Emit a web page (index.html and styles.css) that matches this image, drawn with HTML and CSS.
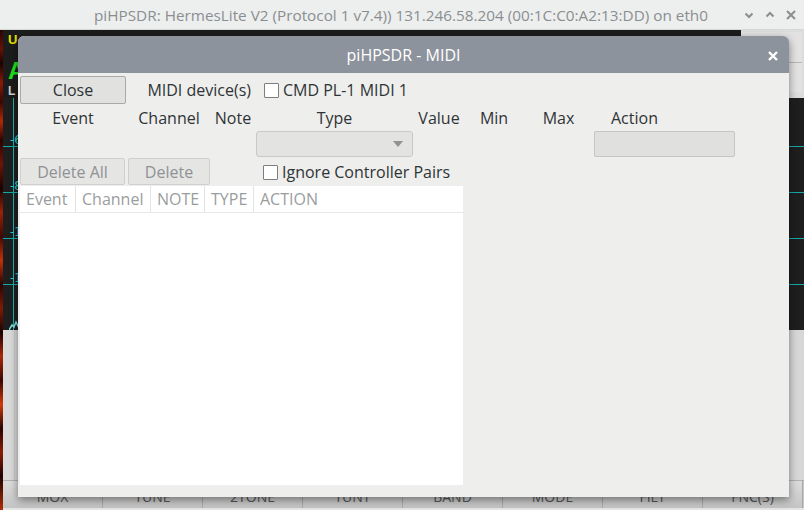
FILE: index.html
```html
<!DOCTYPE html>
<html>
<head>
<meta charset="utf-8">
<link rel="stylesheet" href="styles.css">
</head>
<body>
<div class="screen">
  <header class="wintitle">
    <span class="wintitle-text">piHPSDR: HermesLite V2 (Protocol 1 v7.4)) 131.246.58.204 (00:1C:C0:A2:13:DD) on eth0</span>
    <div class="winctl">
      <svg width="12" height="12" viewBox="0 0 12 12"><path d="M2.5 4.5 L6 8 L9.5 4.5" fill="none" stroke="#8a8e90" stroke-width="2"/></svg>
      <svg width="12" height="12" viewBox="0 0 12 12"><path d="M2.5 7.5 L6 4 L9.5 7.5" fill="none" stroke="#8a8e90" stroke-width="2"/></svg>
      <svg width="12" height="12" viewBox="0 0 12 12"><path d="M2 2 L10 10 M10 2 L2 10" fill="none" stroke="#8a8e90" stroke-width="2"/></svg>
    </div>
  </header>
  <div class="app">
    <div class="wf-strip"></div>
    <div class="app-main">
      <div class="topband">
        <div class="status">
          <div class="st-u">U</div>
          <div class="st-a">A</div>
          <div class="st-l">L</div>
        </div>
        <div class="meter"><div class="meter-top"></div><div class="meter-bot"></div></div>
      </div>
      <div class="pan">
        <div class="vline"></div>
        <div class="db" style="top:36px">-60</div>
        <div class="db" style="top:82px">-80</div>
        <div class="db" style="top:128px">-10</div>
        <div class="db" style="top:174px">-12</div>
        <div class="hline" style="top:48px"></div>
        <div class="hline" style="top:94px"></div>
        <div class="hline" style="top:140px"></div>
        <div class="hline" style="top:186px"></div>
        <svg class="trace" width="20" height="16" viewBox="0 0 20 16"><path d="M0 16 L3 11 L5 13 L7 8 L9 12 L11 6 L13 10 L15 4 L17 9 L20 7" fill="none" stroke="#7fe0e0" stroke-width="1.5"/></svg>
      </div>
      <div class="lower"></div>
      <div class="toolbar">
        <div class="tb">MOX</div><div class="tb">TUNE</div><div class="tb">2TONE</div><div class="tb">TUNT</div>
        <div class="tb">BAND</div><div class="tb">MODE</div><div class="tb">FILT</div><div class="tb">FNC(S)</div>
      </div>
    </div>
  </div>
</div>

<div class="dialog">
  <div class="dlg-title">
    <span></span>
    <span class="dlg-title-text">piHPSDR - MIDI</span>
    <span class="dlg-close"><svg width="10" height="10" viewBox="0 0 10 10"><path d="M1 1 L9 9 M9 1 L1 9" stroke="#fff" stroke-width="2.4" fill="none"/></svg></span>
  </div>
  <div class="dlg-body">
    <div class="grid">
      <button class="btn btn-close">Close</button>
      <div class="lbl-devices">MIDI device(s)</div>
      <label class="chk chk-dev"><span class="box"></span>CMD PL-1 MIDI 1</label>

      <div class="hd hd-event">Event</div>
      <div class="hd hd-channel">Channel</div>
      <div class="hd hd-note">Note</div>
      <div class="hd hd-type">Type</div>
      <div class="hd hd-value">Value</div>
      <div class="hd hd-min">Min</div>
      <div class="hd hd-max">Max</div>
      <div class="hd hd-action">Action</div>

      <div class="combo"><svg width="10" height="6" viewBox="0 0 10 6"><path d="M0 0 L10 0 L5 6 Z" fill="#8f9293"/></svg></div>
      <div class="entry"></div>

      <button class="btn btn-dis btn-delall">Delete All</button>
      <button class="btn btn-dis btn-del">Delete</button>
      <label class="chk chk-ign"><span class="box"></span>Ignore Controller Pairs</label>
    </div>
    <div class="table">
      <div class="thead">
        <div class="th th-event">Event</div>
        <div class="th th-channel">Channel</div>
        <div class="th th-note">NOTE</div>
        <div class="th th-type">TYPE</div>
        <div class="th th-action">ACTION</div>
      </div>
    </div>
  </div>
</div>
</body>
</html>
```
FILE: styles.css
```css
* { box-sizing: border-box; }
html, body { margin: 0; padding: 0; }
body {
  width: 804px;
  height: 510px;
  overflow: hidden;
  background: #e4e4e4;
  font-family: "Open Sans", "Noto Sans", sans-serif;
  font-size: 16px;
  color: #2e3436;
  position: relative;
}
.screen { width: 804px; height: 510px; display: flex; flex-direction: column; }

/* main window title bar */
.wintitle {
  height: 30px;
  background: #edeeee;
  display: flex;
  align-items: center;
  justify-content: center;
  position: relative;
  border-bottom: 1px solid #d6d8d8;
}
.wintitle-text { color: #8a8e90; font-size: 15.3px; margin-right: 2px; }
.winctl {
  position: absolute;
  right: 7px;
  top: 9px;
  display: flex;
  gap: 9px;
}

/* main app area */
.app { flex: 1; display: flex; }
.wf-strip {
  width: 3px;
  background: linear-gradient(180deg, #2a0400 0, #6a1002 4%, #1c0200 7%, #8a1a04 11%, #3a0600 15%, #b02a06 19%, #2a0400 23%, #701404 28%, #1a0200 33%, #9a2206 38%, #420800 43%, #c0320a 48%, #2a0400 53%, #801a04 58%, #1c0200 63%, #a82808 68%, #3c0600 73%, #d03a0a 78%, #2a0400 83%, #8a1c04 88%, #200300 93%, #b02c08 100%);
}
.app-main { flex: 1; display: flex; flex-direction: column; }
.topband { height: 68px; display: flex; background: #1c1c1c; }
.status {
  flex: 1;
  padding: 3px 0 0 5px;
  display: flex;
  flex-direction: column;
  font-family: "Liberation Sans", sans-serif;
  font-weight: bold;
}
.st-u { color: #e5e000; font-size: 13px; line-height: 14px; height: 14px; }
.st-a { color: #1ee01e; font-size: 24px; line-height: 26px; height: 26px; margin-top: 11px; }
.st-l { color: #d0d0d0; font-size: 12px; line-height: 13px; height: 13px; margin-top: 1px; }
.meter { width: 63px; display: flex; flex-direction: column; background: #dcdcdc; padding: 2px 2px 6px 0; }
.meter-top { flex: 1; background: #e2e2e2; border-bottom: 1px solid #b8b8b8; }
.meter-bot { flex: 1; background: #e2e2e2; }

.pan { height: 232px; background: #1e1e1e; position: relative; }
.vline { position: absolute; left: 10px; top: 0; bottom: 0; width: 1px; background: #17b4b4; }
.hline { position: absolute; left: 0; right: 0; height: 1px; background: #16a8a8; }
.db { position: absolute; left: 7px; color: #19d2d2; font-size: 12px; line-height: 12px; font-family: "DejaVu Sans", sans-serif; }
.trace { position: absolute; left: 6px; bottom: 0; }

.lower {
  height: 150px;
  background: linear-gradient(90deg, #d9d9d9 0 11px, #c9c9c9 11px 12px, #d7d7d7 12px);
}
.toolbar { height: 28px; display: flex; background: #c8c8c8; border-top: 1px solid #b0b0b0; }
.tb {
  width: 100px;
  border-right: 1px solid #a8a8a8;
  background: linear-gradient(#dcdcdc, #c4c4c4);
  color: #555;
  font-size: 14px;
  display: flex;
  align-items: center;
  justify-content: center;
  padding-top: 4px;
}

/* dialog window */
.dialog {
  position: absolute;
  left: 18px;
  top: 36px;
  width: 771px;
  height: 461px;
  background: #eeeeec;
  border-radius: 6px 6px 0 0;
  box-shadow: 0 3px 9px rgba(0,0,0,0.45);
  display: flex;
  flex-direction: column;
  overflow: hidden;
}
.dlg-title {
  height: 37px;
  background: #8d939c;
  display: grid;
  grid-template-columns: 1fr auto 1fr;
  align-items: center;
  color: #fff;
}
.dlg-title-text { font-size: 16px; padding-top: 1px; }
.dlg-close { justify-self: end; margin-right: 11px; display: flex; padding-top: 2px; }

.dlg-body { flex: 1; padding: 3px 2px 0; display: flex; flex-direction: column; }
.grid {
  display: grid;
  grid-template-columns: 108px 82px 46px 157px 52px 58px 71px 141px;
  grid-template-rows: 28px 27px 27px 28px;
  align-items: center;
}
.btn {
  font: inherit;
  color: #2e3436;
  background: #e1e1e0;
  border: 1px solid #a9aaa8;
  border-radius: 2px;
  height: 28px;
  padding: 0;
  width: 106px;
}
.btn-close { grid-column: 1; grid-row: 1; }
.btn-dis { color: #8f9294; background: #e5e5e4; border-color: #cfd0ce; height: 27px; }
.btn-delall { grid-column: 1; grid-row: 4; width: 105px; align-self: start; }
.btn-del { grid-column: 2; grid-row: 4; width: 82px; align-self: start; }

.lbl-devices { grid-column: 2 / span 2; grid-row: 1; justify-self: end; margin-right: 5px; }
.chk { display: flex; align-items: center; white-space: nowrap; }
.box {
  width: 15px;
  height: 15px;
  background: #fff;
  border: 1px solid #7d7f7f;
  border-radius: 1px;
  margin-right: 4px;
}
.chk-dev { grid-column: 4 / span 3; grid-row: 1; margin-left: 8px; }
.chk-ign { grid-column: 4 / span 3; grid-row: 4; margin-left: 7px; align-self: start; padding-top: 3px; }

.hd { grid-row: 2; text-align: center; }
.hd-event { grid-column: 1; width: 106px; }
.hd-channel { grid-column: 2; }
.hd-note { grid-column: 3; }
.hd-type { grid-column: 4; }
.hd-value { grid-column: 5; }
.hd-min { grid-column: 6; }
.hd-max { grid-column: 7; }
.hd-action { grid-column: 8; text-align: left; padding-left: 17px; }

.combo {
  grid-column: 4;
  grid-row: 3;
  height: 26px;
  align-self: start;
  background: #e3e3e2;
  border: 1px solid #c9cac8;
  border-radius: 3px;
  display: flex;
  align-items: center;
  justify-content: flex-end;
  padding-right: 9px;
}
.entry {
  grid-column: 8;
  grid-row: 3;
  height: 26px;
  align-self: start;
  background: #e0e0df;
  border: 1px solid #c6c7c5;
  border-radius: 2px;
}

.table {
  width: 443px;
  height: 299px;
  background: #fff;
}
.thead {
  display: flex;
  height: 27px;
  border-bottom: 1px solid #e6e8e8;
  color: #9a9d9e;
}
.th { padding-left: 6px; border-right: 1px solid #e2e4e4; display: flex; align-items: center; }
.th-event { width: 56px; }
.th-channel { width: 75px; }
.th-note { width: 54px; }
.th-type { width: 49px; }
.th-action { border-right: none; }
```
